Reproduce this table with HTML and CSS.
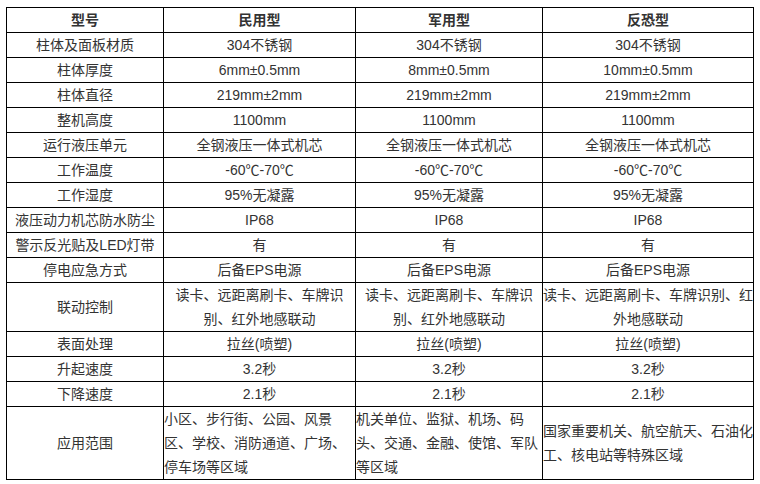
FILE: index.html
```html
<!DOCTYPE html>
<html lang="zh-CN">
<head>
<meta charset="utf-8">
<title>参数表</title>
<link rel="stylesheet" href="styles.css">
</head>
<body>
<div class="wrap">
<table class="spec">
<colgroup>
<col class="c1"><col class="c2"><col class="c3"><col class="c4">
</colgroup>
<thead>
<tr><th>型号</th><th>民用型</th><th>军用型</th><th>反恐型</th></tr>
</thead>
<tbody>
<tr><td>柱体及面板材质</td><td>304不锈钢</td><td>304不锈钢</td><td>304不锈钢</td></tr>
<tr><td>柱体厚度</td><td>6mm±0.5mm</td><td>8mm±0.5mm</td><td>10mm±0.5mm</td></tr>
<tr><td>柱体直径</td><td>219mm±2mm</td><td>219mm±2mm</td><td>219mm±2mm</td></tr>
<tr><td>整机高度</td><td>1100mm</td><td>1100mm</td><td>1100mm</td></tr>
<tr><td>运行液压单元</td><td>全钢液压一体式机芯</td><td>全钢液压一体式机芯</td><td>全钢液压一体式机芯</td></tr>
<tr><td>工作温度</td><td>-60℃-70℃</td><td>-60℃-70℃</td><td>-60℃-70℃</td></tr>
<tr><td>工作湿度</td><td>95%无凝露</td><td>95%无凝露</td><td>95%无凝露</td></tr>
<tr><td>液压动力机芯防水防尘</td><td>IP68</td><td>IP68</td><td>IP68</td></tr>
<tr><td>警示反光贴及LED灯带</td><td>有</td><td>有</td><td>有</td></tr>
<tr><td>停电应急方式</td><td>后备EPS电源</td><td>后备EPS电源</td><td>后备EPS电源</td></tr>
<tr><td>联动控制</td><td>读卡、远距离刷卡、车牌识<br>别、红外地感联动</td><td>读卡、远距离刷卡、车牌识<br>别、红外地感联动</td><td>读卡、远距离刷卡、车牌识别、红<br>外地感联动</td></tr>
<tr><td>表面处理</td><td>拉丝(喷塑)</td><td>拉丝(喷塑)</td><td>拉丝(喷塑)</td></tr>
<tr><td>升起速度</td><td>3.2秒</td><td>3.2秒</td><td>3.2秒</td></tr>
<tr><td>下降速度</td><td>2.1秒</td><td>2.1秒</td><td>2.1秒</td></tr>
<tr><td>应用范围</td><td class="left">小区、步行街、公园、风景<br>区、学校、消防通道、广场、<br>停车场等区域</td><td class="left">机关单位、监狱、机场、码<br>头、交通、金融、使馆、军队<br>等区域</td><td class="left">国家重要机关、航空航天、石油化<br>工、核电站等特殊区域</td></tr>
</tbody>
</table>
</div>
</body>
</html>
```
FILE: styles.css
```css
html, body {
  margin: 0;
  padding: 0;
  background: #fff;
}
.wrap {
  padding: 7px 0 0 6px;
}
.spec {
  border-collapse: collapse;
  table-layout: fixed;
  width: 748px;
  font-family: "Liberation Sans", "Noto Sans CJK SC", sans-serif;
  font-size: 14px;
  line-height: 24px;
  color: #333;
}
.c1 { width: 157px; }
.c2 { width: 192px; }
.c3 { width: 187px; }
.c4 { width: 211px; }
.spec th,
.spec td {
  border: 1px solid #000;
  padding: 0;
  text-align: center;
  vertical-align: middle;
  white-space: nowrap;
  overflow: hidden;
}
.spec th {
  font-weight: bold;
}
.spec td.left {
  text-align: left;
}
```
